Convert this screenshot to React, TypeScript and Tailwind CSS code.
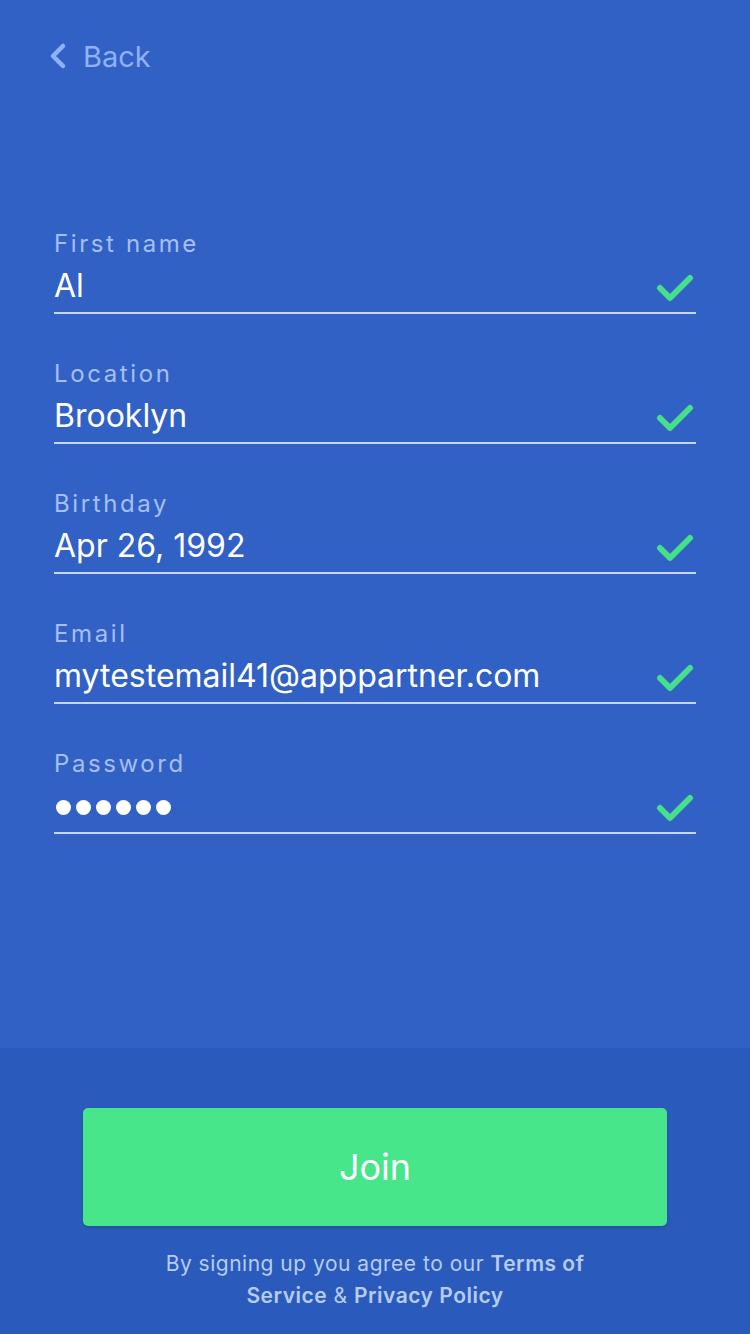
import React from "react";

const fields = [
  { label: "First name", value: "Al" },
  { label: "Location", value: "Brooklyn" },
  { label: "Birthday", value: "Apr 26, 1992" },
  { label: "Email", value: "mytestemail41@apppartner.com" },
  { label: "Password", value: "", password: true },
];

function Check() {
  return (
    <svg width="38" height="30" viewBox="0 0 38 30" fill="none">
      <path d="M4 15 L14 25 L34 5" stroke="#47e08a" strokeWidth="6" strokeLinecap="round" strokeLinejoin="round" />
    </svg>
  );
}

export default function App() {
  return (
    <div className="w-[750px] h-[1334px] flex flex-col bg-[#3261c6]" style={{ fontFamily: "Inter, 'Open Sans', sans-serif" }}>
      <div className="flex-1 flex flex-col">
        <div className="flex items-center h-[60px] mt-[27px] pl-[48px]">
          <svg width="22" height="30" viewBox="0 0 22 30" fill="none">
            <path d="M15 4 L5 14 L15 24" stroke="#8fb1f6" strokeWidth="4.5" strokeLinecap="round" strokeLinejoin="round" />
          </svg>
          <span className="ml-[13px] text-[29px] text-[#8fb1f6]">Back</span>
        </div>
        <div className="flex flex-col px-[54px] mt-[141px]">
          {fields.map((f) => (
            <div key={f.label} className="flex flex-col h-[130px]">
              <div className="text-[24px] leading-[32px] tracking-[2.6px] text-[#a6bff2]">{f.label}</div>
              <div className="flex items-center justify-between h-[54px] border-b-2 border-[#c6d6f7] pb-[2px]">
                {f.password ? (
                  <div className="flex pl-[2px] mt-[4px]">
                    {[0, 1, 2, 3, 4, 5].map((i) => (
                      <div key={i} className="w-[15px] h-[15px] rounded-full bg-white mr-[5px]" />
                    ))}
                  </div>
                ) : (
                  <span className="text-[32px] leading-[40px] text-white mt-[2px]">{f.value}</span>
                )}
                <div className="mr-[2px] mt-[6px]">
                  <Check />
                </div>
              </div>
            </div>
          ))}
        </div>
      </div>
      <div className="h-[286px] bg-[#2a5bbc] flex flex-col items-center">
        <button className="mt-[60px] w-[584px] h-[118px] rounded-[5px] bg-[#47e68a] text-white text-[36px] shadow-[0_2px_3px_rgba(0,0,0,0.15)]">
          Join
        </button>
        <div className="mt-[22px] flex flex-col items-center text-[21px] leading-[32px] tracking-[0.5px] text-[#b7ccf5]">
          <div>
            By signing up you agree to our <b className="font-semibold">Terms of</b>
          </div>
          <div>
            <b className="font-semibold">Service</b> &amp; <b className="font-semibold">Privacy Policy</b>
          </div>
        </div>
      </div>
    </div>
  );
}
